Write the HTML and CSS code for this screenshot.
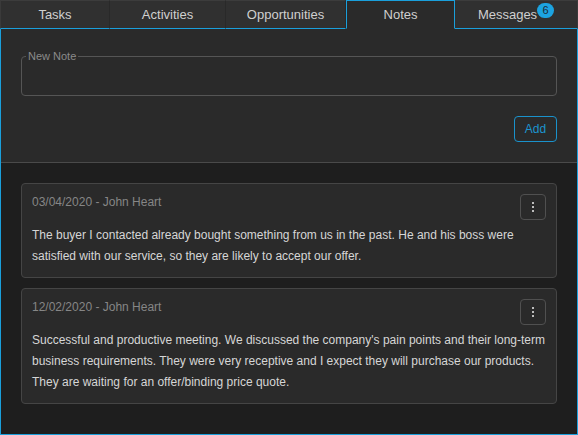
FILE: index.html
```html
<!DOCTYPE html>
<html>
<head>
<meta charset="utf-8">
<link rel="stylesheet" href="styles.css">
</head>
<body>
<div class="widget">
  <div class="tabs">
    <div class="tab tab-first">Tasks</div>
    <div class="tab">Activities</div>
    <div class="tab">Opportunities</div>
    <div class="tab tab-active">Notes</div>
    <div class="tab tab-last"><span>Messages</span><span class="badge">6</span></div>
  </div>
  <div class="panel">
    <div class="compose">
      <div class="field">
        <span class="field-label">New Note</span>
      </div>
      <div class="actions">
        <button class="btn-add">Add</button>
      </div>
    </div>
    <div class="notes">
      <div class="card">
        <div class="card-head">
          <span class="card-meta">03/04/2020 - John Heart</span>
          <button class="btn-menu"><span class="dot"></span><span class="dot"></span><span class="dot"></span></button>
        </div>
        <p class="card-text">The buyer I contacted already bought something from us in the past. He and his boss were satisfied with our service, so they are likely to accept our offer.</p>
      </div>
      <div class="card">
        <div class="card-head">
          <span class="card-meta">12/02/2020 - John Heart</span>
          <button class="btn-menu"><span class="dot"></span><span class="dot"></span><span class="dot"></span></button>
        </div>
        <p class="card-text">Successful and productive meeting. We discussed the company's pain points and their long-term business requirements. They were very receptive and I expect they will purchase our products. They are waiting for an offer/binding price quote.</p>
      </div>
    </div>
  </div>
</div>
</body>
</html>
```

FILE: styles.css
```css
* { box-sizing: border-box; }
html, body {
  margin: 0;
  padding: 0;
  background: #1e1e1e;
}
body {
  font-family: "Liberation Sans", Arial, sans-serif;
  width: 578px;
  height: 435px;
  overflow: hidden;
}
.widget {
  width: 578px;
  height: 435px;
  display: flex;
  flex-direction: column;
}
.tabs {
  display: grid;
  grid-template-columns: 110px 116px 120px 109px 1fr;
  height: 29px;
  flex: none;
}
.tab {
  display: flex;
  align-items: center;
  justify-content: center;
  background: #303030;
  color: #cfcfcf;
  font-size: 13px;
  border-top: 1px solid #3c3c3c;
  border-right: 1px solid #292929;
  border-bottom: 1px solid #1a9fdb;
  padding-bottom: 1px;
}
.tab-first { border-left: 1px solid #3a3a3a; }
.tab-last { border-right: 1px solid #3a3a3a; }
.tab-active {
  background: #2a2a2a;
  border: 1px solid #1a9fdb;
  border-bottom-color: #2a2a2a;
}
.badge {
  align-self: flex-start;
  margin-top: 2px;
  min-width: 17px;
  height: 15px;
  border-radius: 8px;
  background: #1ca3e0;
  color: #1c2a33;
  font-size: 11px;
  line-height: 15px;
  text-align: center;
}
.panel {
  flex: 1;
  display: flex;
  flex-direction: column;
  border: 1px solid #1a9fdb;
  border-top: none;
  background: #1e1e1e;
}
.compose {
  background: #2a2a2a;
  padding: 27px 20px 20px;
  border-bottom: 1px solid #4a4a4a;
}
.field {
  position: relative;
  height: 40px;
  border: 1px solid #555;
  border-radius: 4px;
}
.field-label {
  position: absolute;
  left: 4px;
  top: -8px;
  padding: 0 2px;
  background: #2a2a2a;
  color: #8a8a8a;
  font-size: 11px;
  line-height: 14px;
}
.actions {
  display: flex;
  justify-content: flex-end;
  margin-top: 20px;
}
.btn-add {
  height: 26px;
  width: 43px;
  padding: 0;
  background: transparent;
  border: 1px solid #1a92cc;
  border-radius: 4px;
  color: #1c94cf;
  font-family: "Liberation Sans", Arial, sans-serif;
  font-size: 12px;
}
.notes {
  flex: 1;
  padding: 20px;
  display: flex;
  flex-direction: column;
  gap: 10px;
}
.card {
  background: #2a2a2a;
  border: 1px solid #454545;
  border-radius: 4px;
  padding: 10px 10px 10px;
}
.card-head {
  display: flex;
  justify-content: space-between;
  align-items: flex-start;
}
.card-meta {
  color: #868686;
  font-size: 12px;
  line-height: 16px;
}
.btn-menu {
  width: 26px;
  height: 26px;
  padding: 0;
  background: transparent;
  border: 1px solid #505050;
  border-radius: 4px;
  display: flex;
  flex-direction: column;
  align-items: center;
  justify-content: center;
  gap: 2px;
}
.dot {
  width: 2px;
  height: 2px;
  background: #bdbdbd;
}
.card-text {
  margin: 5px 0 0;
  color: #d6d6d6;
  font-size: 12px;
  line-height: 21px;
}
```
